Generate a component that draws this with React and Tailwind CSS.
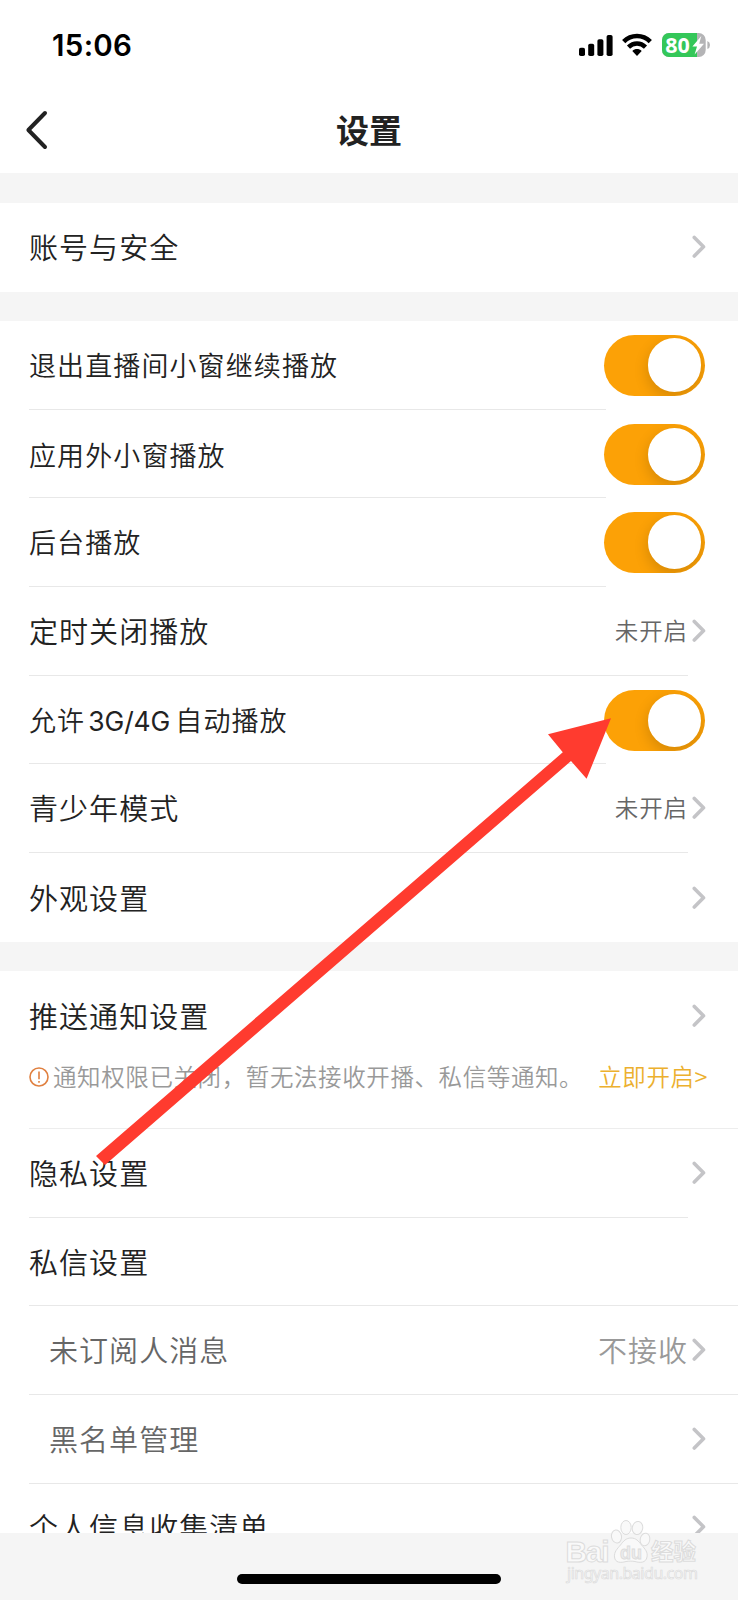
import clsx from "clsx";

const PLAYBACK = [
  { label:"退出直播间小窗继续播放", small:true, toggle:true, h:"h-[89px]" },
  { label:"应用外小窗播放", small:true, toggle:true, h:"h-[88px] pt-[2px]" },
  { label:"后台播放", small:true, toggle:true, h:"h-[89px]" },
  { label:"定时关闭播放", value:"未开启", h:"h-[89px]" },
  { label:<>允许<span className="ml-[3px] mr-[5px] font-['Inter'] text-[26.5px] font-normal tracking-[-0.1px]">3G/4G</span>自动播放</>, small:true, toggle:true, h:"h-[88px] pt-[2px]" },
  { label:"青少年模式", value:"未开启", h:"h-[89px]" },
  { label:"外观设置", last:true, h:"h-[89px]" },
];

function Chevron() {
  return (
    <svg width="14" height="24" viewBox="0 0 14 24" fill="none" stroke="#c4c4c7" strokeWidth="3.6"
      strokeLinecap="round" strokeLinejoin="round" className="shrink-0">
      <path d="M2.3 2.4 L11.5 11.7 L2.3 21"/>
    </svg>
  );
}

function Toggle() {
  return (
    <div className="mr-px flex h-[61px] w-[101px] items-center justify-end overflow-hidden rounded-full bg-[#fca106] pr-[4px]">
      <div className="size-[53.5px] rounded-full bg-white shadow-[0_5px_14px_1px_rgba(0,0,0,0.15)]"/>
    </div>
  );
}

// "to" is where the hairline under the row stops
function Row({ label, small, toggle, value, big, sub, last, plain, h="h-[89px]", to }) {
  const end = to || (toggle ? "w-[577px]" : "w-[659px]");
  return (
    <div className={clsx("flex shrink-0 flex-col bg-white pl-[29px]", h)}>
      <div className={clsx("flex flex-1 items-center justify-between pr-[32px]", sub && "pl-[20px]")}>
        <span className={clsx("whitespace-nowrap pb-[1px] font-[350]",
          small ? "text-[27px] tracking-[1.1px]" : "text-[29px] tracking-[1.05px]",
          sub ? "text-[#666]" : "text-[#222]")}>{label}</span>
        {toggle ? <Toggle/> : !plain && (
          <div className="flex items-center">
            {value && (
              <span className={clsx("mr-[4px] font-[350]", big ? "pb-[1px] text-[29px] tracking-[1px] text-[#999]" : "text-[23.5px] tracking-[0.9px] text-[#666]")}>
                {value}
              </span>
            )}
            <Chevron/>
          </div>
        )}
      </div>
      {!last && <div className={clsx("h-px bg-[#e8e8e8]", end)}/>}
    </div>
  );
}

function StatusBar() {
  return (
    <div className="flex h-[90px] shrink-0 items-center justify-between pl-[52px] pr-[27px]">
      <span className="pt-[2px] font-['Inter'] text-[29.5px] font-semibold tracking-[0.3px] text-black">15:06</span>
      <div className="flex items-center">
        <svg width="35" height="24" viewBox="0 0 35 24" fill="#000">
          <rect x="0" y="14.8" width="6" height="8.2" rx="1.8"/>
          <rect x="9.2" y="10.7" width="6" height="12.3" rx="1.8"/>
          <rect x="18.4" y="6.3" width="6" height="16.7" rx="1.8"/>
          <rect x="27.6" y="1.9" width="6" height="21.1" rx="1.8"/>
        </svg>
        <svg width="30" height="24" viewBox="0 0 30 24" className="ml-[8px]">
          <path d="M1.7 8.6 C9.2 1.2 20.8 1.2 28.3 8.6" fill="none" stroke="#000" strokeWidth="4.6"/>
          <path d="M6.5 14.1 C11.3 9.3 18.7 9.3 23.5 14.1" fill="none" stroke="#000" strokeWidth="4.4"/>
          <path d="M10.3 18 C13 15.4 17 15.4 19.7 18 L15 22.9 Z" fill="#000"/>
        </svg>
        <svg width="49" height="24" viewBox="0 0 49 24" className="ml-[10px]">
          <clipPath id="cell"><rect width="43.7" height="24" rx="7"/></clipPath>
          <g clipPath="url(#cell)">
            <rect width="44" height="24" fill="#b4b4b6"/>
            <rect width="35" height="24" fill="#34c759"/>
          </g>
          <path d="M45.4 8 Q48 9 48 12 Q48 15 45.4 16 Z" fill="#b4b4b6"/>
          <text x="3.2" y="19.8" fontFamily="Noto Sans" fontWeight="700" fontSize="21.5" fill="#fff">80</text>
          <path d="M39.3 3 L30.4 13.4 H35 L32.6 21.4 L42 10.7 H37.2 Z" fill="#fff"/>
        </svg>
      </div>
    </div>
  );
}

function Watermark() {
  return (
    <svg width="140" height="72" viewBox="0 0 140 72" className="absolute left-[562px] top-[1516px]"
      fill="#f9f9f9" stroke="#dcdcdc" strokeWidth="1">
      <text x="3.5" y="45.5" fontFamily="Liberation Sans" fontWeight="700" fontSize="30" textLength="44">Bai</text>
      <ellipse cx="54.5" cy="20.5" rx="5" ry="6.6" transform="rotate(-10 54.5 20.5)"/>
      <ellipse cx="64" cy="11.5" rx="5.2" ry="7"/>
      <ellipse cx="75.5" cy="12" rx="5.2" ry="6.6" transform="rotate(12 75.5 12)"/>
      <ellipse cx="83" cy="23.5" rx="4.8" ry="6.3" transform="rotate(12 83 23.5)"/>
      <path d="M69 22 C74 22 76.5 25 79.5 29 C83 33 86 36 85 41 C84 47 78 47 73 45.5 C70 45 67 45 64 45.5 C59 47 53 47 52.5 41 C52 36 55 33 58.5 29 C61.5 25 64 22 69 22 Z"/>
      <text x="58" y="42.5" fontFamily="Liberation Sans" fontWeight="700" fontSize="18" fill="#ececec" strokeWidth="0.8">du</text>
      <text x="89" y="44" fontFamily="Noto Sans CJK SC" fontWeight="700" fontSize="22.5">经验</text>
      <text x="5" y="63" fontFamily="Noto Sans" fontSize="16" textLength="131" strokeWidth="0.7">jingyan.baidu.com</text>
    </svg>
  );
}

export default function App() {
  return (
    <div className="relative flex h-[1600px] w-[738px] flex-col overflow-hidden bg-white font-['Noto_Sans_CJK_SC',sans-serif] leading-none">
      <StatusBar/>

      {/* Title bar */}
      <div className="grid h-[83px] shrink-0 grid-cols-[60px_1fr_60px] items-center pb-[3px]">
        <svg width="24" height="40" viewBox="0 0 24 40" fill="none" stroke="#222" strokeWidth="4"
          strokeLinecap="round" strokeLinejoin="round" className="ml-[25px]">
          <path d="M20 3 L3.4 20 L20 37"/>
        </svg>
        <h1 className="pb-[2px] text-center text-[33px] font-semibold text-[#222]">设置</h1>
      </div>

      {/* Settings list */}
      <div className="flex min-h-0 flex-1 flex-col overflow-hidden">
        <div className="h-[30px] shrink-0 bg-[#f5f5f5]"/>
        <Row label="账号与安全" last h="h-[89px] pb-[1px]"/>
        <div className="h-[29px] shrink-0 bg-[#f5f5f5]"/>
        {PLAYBACK.map((r,i)=><Row key={i} {...r}/>)}
        <div className="h-[29px] shrink-0 bg-[#f5f5f5]"/>

        <Row label="推送通知设置" last/>
        <div className="flex h-[69px] shrink-0 flex-col pl-[29px]">
          <div className="flex h-[34px] items-center whitespace-nowrap text-[23.5px] font-[350] tracking-[0.6px]">
            <svg width="20" height="20" viewBox="0 0 20 20" fill="none" stroke="#e08040" strokeWidth="1.6" className="mr-[4px] shrink-0">
              <circle cx="10" cy="10" r="9"/>
              <path d="M10 4.6 V12.2 M10 14 V15.8"/>
            </svg>
            <span className="text-[#999]">通知权限已关闭，暂无法接收开播、私信等通知。</span>
            <span className="ml-[15px] text-[#ecb02e]">立即开启&gt;</span>
          </div>
          <div className="mt-auto h-px bg-[#ededed]"/>
        </div>
        <Row label="隐私设置"/>
        <Row label="私信设置" plain h="h-[88px]" to="w-full"/>
        <Row label="未订阅人消息" sub value="不接收" big to="w-full"/>
        <Row label="黑名单管理" sub to="w-full"/>
        <Row label="个人信息收集清单" last h="h-[86px]"/>
      </div>

      {/* Home indicator */}
      <div className="flex h-[67px] shrink-0 justify-center bg-[#f5f5f5] pt-[41px]">
        <div className="h-[10px] w-[264px] rounded-full bg-black"/>
      </div>

      <Watermark/>

      {/* Pointer arrow */}
      <svg width="738" height="1600" viewBox="0 0 738 1600" className="pointer-events-none absolute left-0 top-0">
        <path d="M611 718.3 L548 734.3 L562.8 752.3 L96 1156 L105 1165 L571 761 L586.6 778.8 Z" fill="#ff3b2f"/>
      </svg>
    </div>
  );
}
